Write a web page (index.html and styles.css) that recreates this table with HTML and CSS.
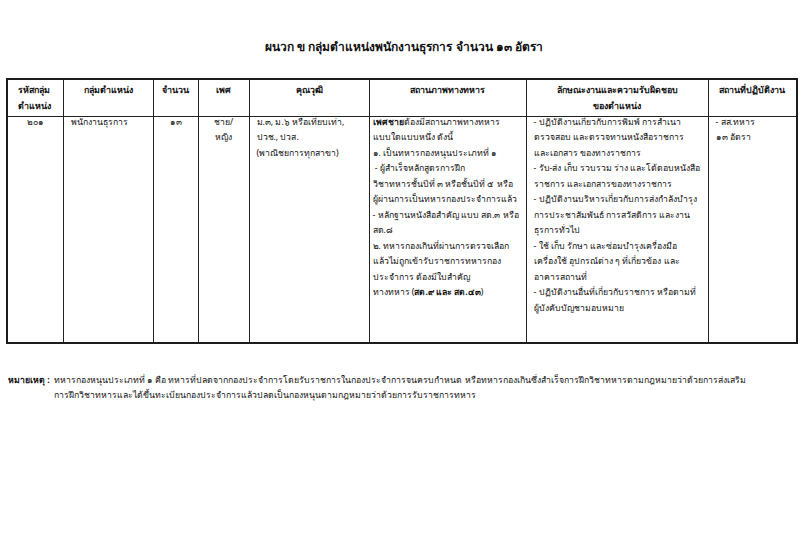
FILE: index.html
```html
<!DOCTYPE html>
<html lang="th">
<head>
<meta charset="utf-8">
<link rel="stylesheet" href="styles.css">
</head>
<body>
<div class="page">
  <h1 class="title">ผนวก ข กลุ่มตำแหน่งพนักงานธุรการ จำนวน ๑๓ อัตรา</h1>
  <table class="grid">
    <colgroup>
      <col class="c1"><col class="c2"><col class="c3"><col class="c4">
      <col class="c5"><col class="c6"><col class="c7"><col class="c8">
    </colgroup>
    <thead>
      <tr>
        <th class="left">รหัสกลุ่ม<br>ตำแหน่ง</th>
        <th>กลุ่มตำแหน่ง</th>
        <th>จำนวน</th>
        <th>เพศ</th>
        <th>คุณวุฒิ</th>
        <th>สถานภาพทางทหาร</th>
        <th>ลักษณะงานและความรับผิดชอบ<br>ของตำแหน่ง</th>
        <th>สถานที่ปฏิบัติงาน</th>
      </tr>
    </thead>
    <tbody>
      <tr>
        <td class="center"><div class="cell">๒๐๑</div></td>
        <td class="pad"><div class="cell">พนักงานธุรการ</div></td>
        <td class="center"><div class="cell">๑๓</div></td>
        <td class="center"><div class="cell">ชาย/<br>หญิง</div></td>
        <td class="pad"><div class="cell">ม.๓, ม.๖ หรือเทียบเท่า,<br>ปวช., ปวส.<br>(พาณิชยการทุกสาขา)</div></td>
        <td class="tight"><div class="cell"><b>เพศชาย</b>ต้องมีสถานภาพทางทหาร<br>แบบใดแบบหนึ่ง ดังนี้<br>๑. เป็นทหารกองหนุนประเภทที่ ๑<br>&nbsp;- ผู้สำเร็จหลักสูตรการฝึก<br>วิชาทหารชั้นปีที่ ๓ หรือชั้นปีที่ ๕ หรือ<br>ผู้ผ่านการเป็นทหารกองประจำการแล้ว<br>- หลักฐานหนังสือสำคัญ แบบ สด.๓ หรือ<br>สด.๘<br>๒. ทหารกองเกินที่ผ่านการตรวจเลือก<br>แล้วไม่ถูกเข้ารับราชการทหารกอง<br>ประจำการ ต้องมีใบสำคัญ<br>ทางทหาร (<b>สด.๙ และ สด.๔๓</b>)</div></td>
        <td class="pad"><div class="cell">- ปฏิบัติงานเกี่ยวกับการพิมพ์ การสำเนา<br>ตรวจสอบ และตรวจทานหนังสือราชการ<br>และเอกสาร ของทางราชการ<br>- รับ-ส่ง เก็บ รวบรวม ร่าง และโต้ตอบหนังสือ<br>ราชการ และเอกสารของทางราชการ<br>- ปฏิบัติงานบริหารเกี่ยวกับการส่งกำลังบำรุง<br>การประชาสัมพันธ์ การสวัสดิการ และงาน<br>ธุรการทั่วไป<br>- ใช้ เก็บ รักษา และซ่อมบำรุงเครื่องมือ<br>เครื่องใช้ อุปกรณ์ต่าง ๆ ที่เกี่ยวข้อง และ<br>อาคารสถานที่<br>- ปฏิบัติงานอื่นที่เกี่ยวกับราชการ หรือตามที่<br>ผู้บังคับบัญชามอบหมาย</div></td>
        <td class="pad"><div class="cell">- สส.ทหาร<br>๑๓ อัตรา</div></td>
      </tr>
    </tbody>
  </table>
  <div class="note">
    <span class="note-label">หมายเหตุ :</span>
    <div class="note-body">
      <div class="note-line">ทหารกองหนุนประเภทที่ ๑ คือ ทหารที่ปลดจากกองประจำการโดยรับราชการในกองประจำการจนครบกำหนด หรือทหารกองเกินซึ่งสำเร็จการฝึกวิชาทหารตามกฎหมายว่าด้วยการส่งเสริม</div>
      <div class="note-line">การฝึกวิชาทหารและได้ขึ้นทะเบียนกองประจำการแล้วปลดเป็นกองหนุนตามกฎหมายว่าด้วยการรับราชการทหาร</div>
    </div>
  </div>
</div>
</body>
</html>
```
FILE: styles.css
```css
html, body {
  margin: 0;
  padding: 0;
  background: #ffffff;
}
body {
  font-family: "Noto Sans", "DejaVu Sans", sans-serif;
  color: #111111;
  font-size: 8.7px;
}
.page {
  width: 800px;
  height: 539px;
  padding: 38px 0 0 6px;
  box-sizing: border-box;
}
.title {
  margin: 0 0 22px 0;
  width: 790px;
  text-align: center;
  font-size: 12px;
  font-weight: bold;
  line-height: 18px;
  padding-left: 6px;
  box-sizing: border-box;
}
.grid {
  border-collapse: collapse;
  table-layout: fixed;
  width: 790px;
  border: 2px solid #1c1c1c;
}
.c1 { width: 56px; }
.c2 { width: 90px; }
.c3 { width: 45px; }
.c4 { width: 51px; }
.c5 { width: 120px; }
.c6 { width: 157px; }
.c7 { width: 182px; }
.c8 { width: 89px; }
.grid th, .grid td {
  border: 1.5px solid #222222;
  vertical-align: top;
  line-height: 15.5px;
  white-space: nowrap;
  overflow: hidden;
}
.grid th {
  font-weight: bold;
  font-size: 8.9px;
  text-align: center;
  height: 37px;
  padding: 2px 2px 0 2px;
  box-sizing: border-box;
}
.grid th.left {
  text-align: left;
  padding-left: 10px;
}
.grid td {
  height: 225px;
  padding: 0 2px 0 7px;
}
.grid td.center {
  text-align: center;
  padding-left: 2px;
}
.grid td.tight {
  padding-left: 3px;
}
.cell {
  margin-top: -2px;
}
.note {
  display: flex;
  margin-top: 29px;
  padding-left: 2px;
  line-height: 15px;
}
.note-label {
  font-weight: bold;
  white-space: nowrap;
  padding-right: 4px;
}
.note-line {
  white-space: nowrap;
}
```
